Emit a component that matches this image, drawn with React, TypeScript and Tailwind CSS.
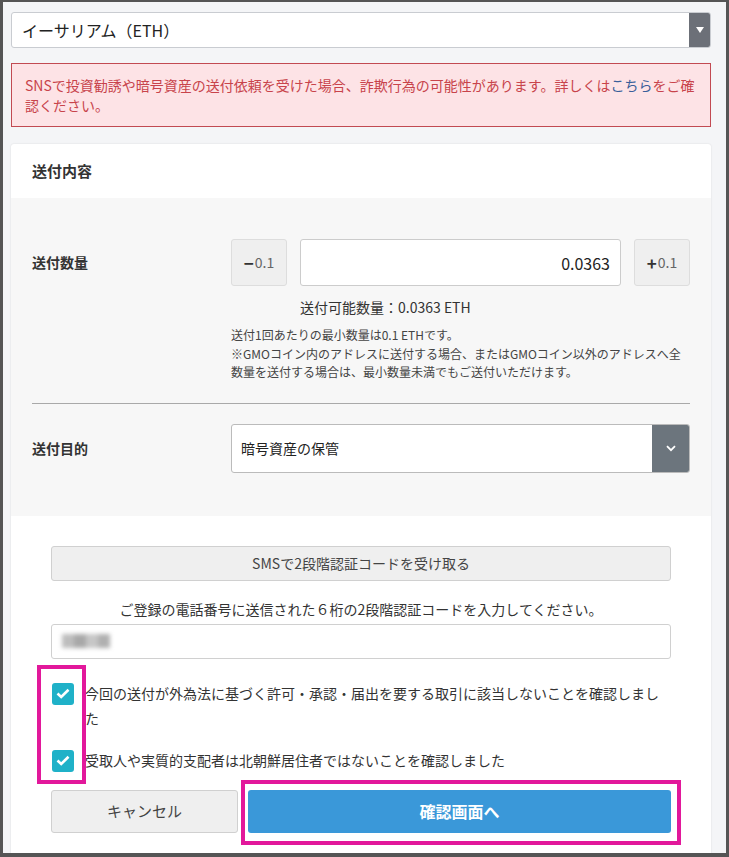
export default function App() {
  return (
    <div className="w-[729px] h-[857px] overflow-hidden bg-[#555] pt-[2px] px-[3px] pb-[4px] font-['Noto_Sans_CJK_JP','Noto_Sans',sans-serif] text-[#333]">
      <div className="relative h-full overflow-hidden bg-[#f4f5f7] pl-[8px] pr-[15px] pt-[10px]">
        {/* currency select */}
        <div className="flex h-[36px] overflow-hidden rounded-[3px] border border-[#c9ccd1] bg-white">
          <div className="flex flex-1 items-center pl-[10px] text-[16px] text-[#222]">イーサリアム（ETH）</div>
          <div className="flex w-[21px] items-center justify-center bg-[#6c7078]">
            <svg width="8" height="6" viewBox="0 0 8 6">
              <polygon points="0,0 8,0 4,6" fill="#fff" />
            </svg>
          </div>
        </div>

        {/* warning */}
        <div className="mt-[15px] border border-[#c24a52] bg-[#fde3e6] px-[13px] py-[11px] text-[14px] leading-[20px] text-[#c8434b]">
          <span className="whitespace-nowrap">
            SNSで投資勧誘や暗号資産の送付依頼を受けた場合、詐欺行為の可能性があります。詳しくは
            <span className="text-[#3a5f9a]">こちら</span>をご確
          </span>
          <br />
          認ください。
        </div>

        {/* card */}
        <div className="mt-[17px] h-[800px] rounded-t-[3px] bg-white shadow-[0_0_2px_rgba(0,0,0,0.12)]">
          <div className="flex h-[54px] items-center px-[21px] text-[15px] font-bold">送付内容</div>

          <div className="bg-[#f7f7f7] px-[21px] pt-[41px] pb-[43px]">
            {/* quantity */}
            <div className="flex">
              <div className="flex h-[47px] w-[199px] items-center text-[14px] font-bold">送付数量</div>
              <div className="w-[459px]">
                <div className="flex h-[47px] gap-[13px]">
                  <div className="flex w-[56px] items-center justify-center gap-[1px] rounded-[3px] border border-[#ddd] bg-[#efefef]">
                    <span className="text-[17px] font-bold text-[#333]">−</span>
                    <span className="text-[14px] text-[#666]">0.1</span>
                  </div>
                  <div className="flex flex-1 items-center justify-end rounded-[3px] border border-[#ccc] bg-white pr-[10px] text-[16px] text-[#222]">
                    0.0363
                  </div>
                  <div className="flex w-[56px] items-center justify-center gap-[1px] rounded-[3px] border border-[#ddd] bg-[#efefef]">
                    <span className="text-[17px] font-bold text-[#333]">+</span>
                    <span className="text-[14px] text-[#666]">0.1</span>
                  </div>
                </div>
                <div className="mt-[11px] pl-[69px] text-[14px] leading-[20px] text-[#333]">送付可能数量：0.0363 ETH</div>
                <div className="mt-[9px] whitespace-nowrap text-[12px] leading-[18.5px] text-[#444]">
                  送付1回あたりの最小数量は0.1 ETHです。
                  <br />
                  ※GMOコイン内のアドレスに送付する場合、またはGMOコイン以外のアドレスへ全
                  <br />
                  数量を送付する場合は、最小数量未満でもご送付いただけます。
                </div>
              </div>
            </div>

            <div className="mt-[21px] h-px bg-[#a9a9a9]" />

            {/* purpose */}
            <div className="mt-[20px] flex">
              <div className="flex h-[49px] w-[199px] items-center text-[14px] font-bold">送付目的</div>
              <div className="flex h-[49px] w-[459px] overflow-hidden rounded-[3px] border border-[#bbb] bg-white">
                <div className="flex flex-1 items-center pl-[9px] text-[14px] text-[#222]">暗号資産の保管</div>
                <div className="flex w-[37px] items-center justify-center bg-[#6c757d]">
                  <svg width="10" height="7" viewBox="0 0 10 7" fill="none">
                    <path d="M1 1.2 L5 5.2 L9 1.2" stroke="#fff" strokeWidth="1.8" />
                  </svg>
                </div>
              </div>
            </div>
          </div>

          {/* verification */}
          <div className="px-[40px] pt-[30px]">
            <div className="flex h-[35px] items-center justify-center rounded-[3px] border border-[#d0d0d0] bg-[#efefef] text-[14px] text-[#444]">
              SMSで2段階認証コードを受け取る
            </div>
            <div className="mt-[18px] text-center text-[14px] leading-[20px] text-[#333]">
              ご登録の電話番号に送信された６桁の2段階認証コードを入力してください。
            </div>
            <div className="mt-[5px] flex h-[35px] items-center rounded-[3px] border border-[#d0d0d0] bg-white pl-[10px]">
              <div className="flex h-[14px] blur-[2px]">
                <div className="w-[12px] bg-[#bdbdbd]" />
                <div className="w-[12px] bg-[#a8a8a8]" />
                <div className="w-[12px] bg-[#c6c6c6]" />
                <div className="w-[12px] bg-[#b0b0b0]" />
              </div>
            </div>

            <div className="mt-[22px] flex items-start">
              <Check />
              <div className="ml-[11px] whitespace-nowrap text-[14px] leading-[25px] text-[#333]">
                今回の送付が外為法に基づく許可・承認・届出を要する取引に該当しないことを確認しまし
                <br />た
              </div>
            </div>
            <div className="mt-[17px] flex items-start">
              <Check />
              <div className="ml-[11px] whitespace-nowrap text-[14px] leading-[25px] text-[#333]">
                受取人や実質的支配者は北朝鮮居住者ではないことを確認しました
              </div>
            </div>

            <div className="mt-[17px] flex gap-[10px]">
              <div className="flex h-[43px] w-[187px] items-center justify-center rounded-[3px] border border-[#d0d0d0] bg-[#efefef] text-[15px] text-[#444]">
                キャンセル
              </div>
              <div className="flex h-[43px] flex-1 items-center justify-center rounded-[3px] bg-[#3a98d9] text-[16px] font-bold text-white">
                確認画面へ
              </div>
            </div>
          </div>
        </div>

        {/* highlight marks */}
        <div className="absolute left-[34px] top-[663px] h-[119px] w-[49px] border-[4px] border-[#e2189b]" />
        <div className="absolute left-[238px] top-[778px] h-[65px] w-[440px] border-[4px] border-[#e2189b]" />
      </div>
    </div>
  );
}

function Check() {
  return (
    <div className="mt-[2px] ml-[1px] flex h-[22px] w-[22px] shrink-0 items-center justify-center rounded-[3px] bg-[#1fb1c8]">
      <svg width="14" height="11" viewBox="0 0 14 11" fill="none">
        <path d="M1.5 5.5 L5.2 9 L12.5 1.8" stroke="#fff" strokeWidth="2.6" />
      </svg>
    </div>
  );
}
